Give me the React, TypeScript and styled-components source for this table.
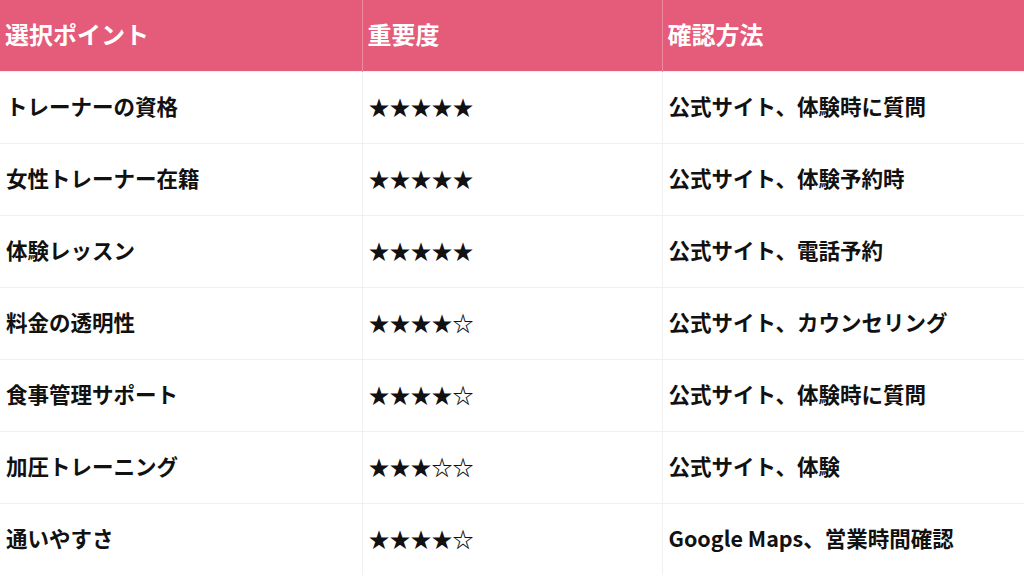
import React from "react"
import styled, { createGlobalStyle } from "styled-components"

const rows = [
  { point: "トレーナーの資格", stars: 5, check: "公式サイト、体験時に質問" },
  { point: "女性トレーナー在籍", stars: 5, check: "公式サイト、体験予約時" },
  { point: "体験レッスン", stars: 5, check: "公式サイト、電話予約" },
  { point: "料金の透明性", stars: 4, check: "公式サイト、カウンセリング" },
  { point: "食事管理サポート", stars: 4, check: "公式サイト、体験時に質問" },
  { point: "加圧トレーニング", stars: 3, check: "公式サイト、体験" },
  { point: "通いやすさ", stars: 4, check: "Google Maps、営業時間確認" }
]

const App = () => {
  return (
    <>
      <GlobalStyle />
      <Table>
        <colgroup>
          <col style={{ width: 362 }} />
          <col style={{ width: 300 }} />
          <col />
        </colgroup>
        <thead>
          <tr>
            <Th>選択ポイント</Th>
            <Th>重要度</Th>
            <Th>確認方法</Th>
          </tr>
        </thead>
        <tbody>
          {rows.map((r) => (
            <tr key={r.point}>
              <Td>{r.point}</Td>
              <Stars>{"★".repeat(r.stars) + "☆".repeat(5 - r.stars)}</Stars>
              <Td>{r.check}</Td>
            </tr>
          ))}
        </tbody>
      </Table>
    </>
  )
}

const GlobalStyle = createGlobalStyle`
  body {
    margin: 0;
    background: #fff;
    font-family: "Noto Sans CJK JP", "Noto Sans", sans-serif;
  }
`

const Table = styled.table`
  width: 1024px;
  border-collapse: collapse;
  table-layout: fixed;
`

const Th = styled.th`
  box-sizing: border-box;
  height: 71px;
  padding: 0 5px 3px;
  background: #e55b7a;
  color: #fff;
  font-size: 24px;
  font-weight: 700;
  text-align: left;
  border-left: 1px solid #ee8aa0;
  &:first-child {
    border-left: none;
  }
`

const Td = styled.td`
  box-sizing: border-box;
  height: 72px;
  padding: 0 6px 3px;
  color: #111;
  font-size: 21.5px;
  font-weight: 700;
  border-top: 1px solid #f0f0f0;
  border-left: 1px solid #f0f0f0;
  &:first-child {
    border-left: none;
  }
`

const Stars = styled(Td)`
  font-size: 21px;
`

export default App
